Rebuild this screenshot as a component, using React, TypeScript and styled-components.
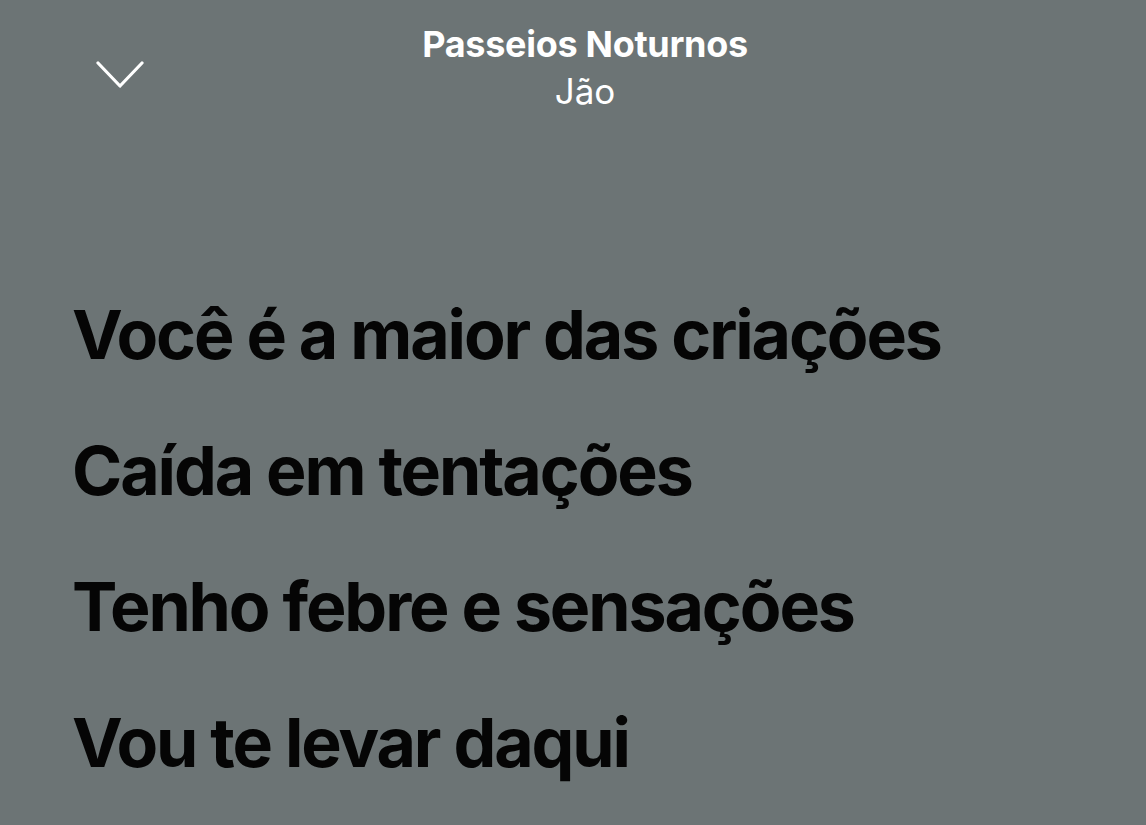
import styled, { createGlobalStyle } from "styled-components";

const GlobalStyle = createGlobalStyle`
  html, body {
    margin: 0;
    padding: 0;
    background: #6c7475;
  }
  body {
    font-family: Inter, "Noto Sans", sans-serif;
  }
`;

const Screen = styled.main`
  width: 1146px;
  height: 825px;
  overflow: hidden;
  background: #6c7475;
  display: flex;
  flex-direction: column;
`;

const Header = styled.header`
  display: grid;
  grid-template-columns: 1fr auto 1fr;
  align-items: start;
  padding: 22px 0 0 24px;
  height: 200px;
  box-sizing: border-box;
`;

const CloseButton = styled.button`
  justify-self: start;
  margin: 38px 0 0 72px;
  padding: 0;
  border: none;
  background: none;
  width: 48px;
  height: 30px;
  display: flex;
  cursor: pointer;
`;

const TrackInfo = styled.div`
  display: flex;
  flex-direction: column;
  align-items: center;
  color: #fff;
`;

const Title = styled.h1`
  margin: 0;
  font-size: 36px;
  font-weight: 700;
  letter-spacing: -0.3px;
  line-height: 44px;
`;

const Artist = styled.h2`
  margin: 0;
  font-size: 35px;
  font-weight: 400;
  line-height: 50px;
`;

const Lyrics = styled.section`
  display: flex;
  flex-direction: column;
  padding: 66px 0 0 72px;
`;

const Line = styled.p`
  margin: 0;
  color: #050505;
  font-size: 68px;
  font-weight: 700;
  letter-spacing: -2.1px;
  line-height: 136px;
  white-space: nowrap;
`;

const lines = [
  "Você é a maior das criações",
  "Caída em tentações",
  "Tenho febre e sensações",
  "Vou te levar daqui",
];

const App = () => {
  return (
    <>
      <GlobalStyle />
      <Screen>
        <Header>
          <CloseButton aria-label="Fechar">
            <svg width="48" height="30" viewBox="0 0 48 30" fill="none">
              <path
                d="M2 3 L24 26 L46 3"
                stroke="#fff"
                strokeWidth="3.2"
                strokeLinecap="round"
                strokeLinejoin="round"
              />
            </svg>
          </CloseButton>
          <TrackInfo>
            <Title>Passeios Noturnos</Title>
            <Artist>Jão</Artist>
          </TrackInfo>
          <div />
        </Header>
        <Lyrics>
          {lines.map((l) => (
            <Line key={l}>{l}</Line>
          ))}
        </Lyrics>
      </Screen>
    </>
  );
};

export default App;
